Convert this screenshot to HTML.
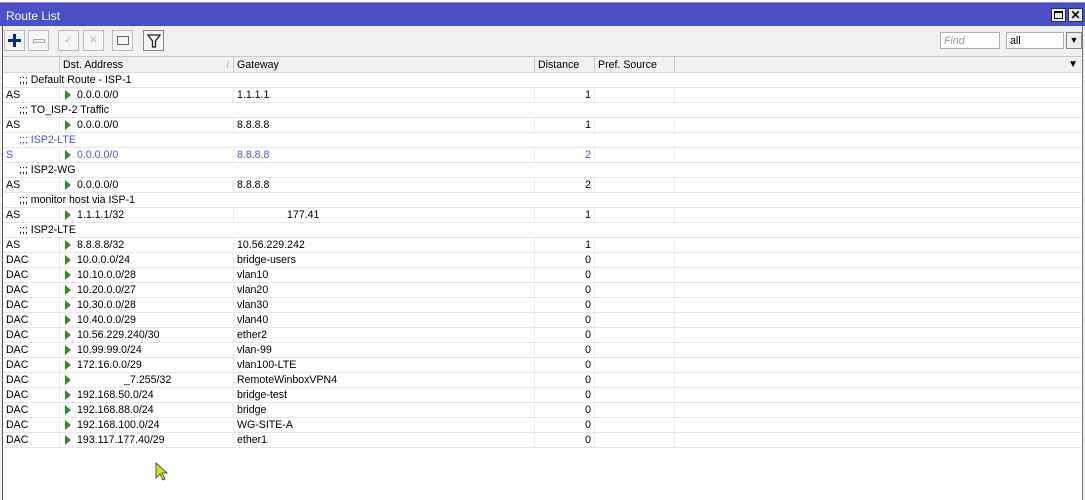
<!DOCTYPE html>
<html><head><meta charset="utf-8"><style>
*{margin:0;padding:0;box-sizing:border-box}
body{width:1085px;height:500px;background:#fff;font-family:"Liberation Sans",sans-serif;font-size:10.6px;color:#000;position:relative;overflow:hidden}
.a{position:absolute}
.title{left:0;top:2px;width:1085px;height:24px;background:#4b4fc8;color:#fff;font-size:12px;line-height:26px;padding-left:6px;border-top:1px solid #8a8ad8}
.tb{left:0;top:26px;width:1085px;height:30px;background:#f0f0f0}
.btn{top:30px;width:21px;height:21px;border:1px solid #bdbdbd;background:#f4f4f4}
.hdr{left:3px;top:56px;width:1079px;height:17px;background:#f0f0f0;border-top:1px solid #c8c8c8;border-bottom:1px solid #d8d8d8}
.hc{top:56px;height:17px;line-height:18px;border-left:1px solid #c8c8c8;padding-left:3px}
.row{left:3px;width:1079px;height:15px;border-bottom:1px solid #e6e6e6;line-height:15px;white-space:nowrap}
.row span{position:absolute;top:0}
.cell{border-left:1px solid #ececec;height:15px}
.tri{width:0;height:0;border-top:5px solid transparent;border-bottom:5px solid transparent;border-left:6px solid #2f8a2f;top:2px!important}
.blue{color:#4f58c0}
</style></head><body>
<div class="a title">Route List</div>
<div class="a" style="left:1051px;top:8px;width:15px;height:14px;background:#e8e8e8;border:1px solid #333"><div style="margin:2px;width:9px;height:8px;border:1px solid #000;border-top-width:2px"></div></div>
<div class="a" style="left:1068px;top:8px;width:15px;height:14px;background:#e8e8e8;border:1px solid #333;font-weight:bold;font-size:12px;line-height:12px;text-align:center">✕</div>
<div class="a tb"></div>
<div class="a btn" style="left:4px"><div class="a" style="left:3px;top:8px;width:13px;height:3px;background:#0a2a8a"></div><div class="a" style="left:8px;top:3px;width:3px;height:13px;background:#0a2a8a"></div></div>
<div class="a btn" style="left:28px"><div class="a" style="left:4px;top:8px;width:12px;height:4px;border:1px solid #aaa"></div></div>
<div class="a btn" style="left:58px;color:#bbb;text-align:center;line-height:19px">✓</div>
<div class="a btn" style="left:83px;color:#bbb;text-align:center;line-height:19px">✕</div>
<div class="a btn" style="left:112px"><div class="a" style="left:4px;top:5px;width:12px;height:9px;border:1px solid #666"></div></div>
<div class="a btn" style="left:143px;border-color:#888"><svg class="a" style="left:3px;top:3px" width="14" height="14"><path d="M1 1H13L8.5 7V13H5.5V7Z" fill="none" stroke="#222" stroke-width="1.3"/></svg></div>
<div class="a" style="left:940px;top:32px;width:60px;height:17px;border:1px solid #b0b0b0;background:#fff;color:#999;font-style:italic;padding-left:3px;line-height:16px">Find</div>
<div class="a" style="left:1006px;top:32px;width:58px;height:17px;border:1px solid #b0b0b0;background:#fff;padding-left:3px;line-height:16px">all</div>
<div class="a" style="left:1066px;top:32px;width:16px;height:17px;border:1px solid #888;background:#eee;text-align:center;font-size:9px;line-height:15px">▼</div>
<div class="a" style="left:0;top:26px;width:3px;height:474px;background:#f0f0f0;border-right:1px solid #555"></div>
<div class="a" style="left:1082px;top:26px;width:3px;height:474px;background:#f0f0f0;border-left:1px solid #777"></div>
<div class="a hdr"></div>
<div class="a hc" style="left:59px;width:174px">Dst. Address<span class="a" style="right:4px;color:#999;font-size:9px">/</span></div>
<div class="a hc" style="left:233px;width:301px">Gateway</div>
<div class="a hc" style="left:534px;width:60px">Distance</div>
<div class="a hc" style="left:594px;width:80px">Pref. Source</div>
<div class="a hc" style="left:674px;width:408px"><span class="a" style="right:4px;font-size:10px">▼</span></div>
<div id="rows"></div>
<div class="a" style="left:155px;top:462px"><svg width="14" height="20"><path d="M1 1V16L5 12L8 18L10 17L7 11H12Z" fill="#d6e020" stroke="#333" stroke-width="0.8"/></svg></div>
<script>
var R=[
["c",";;; Default Route - ISP-1"],["AS","0.0.0.0/0","1.1.1.1","1"],
["c",";;; TO_ISP-2 Traffic"],["AS","0.0.0.0/0","8.8.8.8","1"],
["cb",";;; ISP2-LTE"],["S","0.0.0.0/0","8.8.8.8","2","b"],
["c",";;; ISP2-WG"],["AS","0.0.0.0/0","8.8.8.8","2"],
["c",";;; monitor host via ISP-1"],["AS","1.1.1.1/32","                 177.41","1"],
["c",";;; ISP2-LTE"],["AS","8.8.8.8/32","10.56.229.242","1"],
["DAC","10.0.0.0/24","bridge-users","0"],["DAC","10.10.0.0/28","vlan10","0"],["DAC","10.20.0.0/27","vlan20","0"],
["DAC","10.30.0.0/28","vlan30","0"],["DAC","10.40.0.0/29","vlan40","0"],["DAC","10.56.229.240/30","ether2","0"],
["DAC","10.99.99.0/24","vlan-99","0"],["DAC","172.16.0.0/29","vlan100-LTE","0"],["DAC","                _7.255/32","RemoteWinboxVPN4","0"],
["DAC","192.168.50.0/24","bridge-test","0"],["DAC","192.168.88.0/24","bridge","0"],["DAC","192.168.100.0/24","WG-SITE-A","0"],
["DAC","193.117.177.40/29","ether1","0"]];
var h="";
R.forEach(function(r,i){var t=73+i*15;
if(r[0][0]=="c"){h+='<div class="a row'+(r[0]=="cb"?" blue":"")+'" style="top:'+t+'px"><span style="left:16px">'+r[1]+'</span></div>';}
else{h+='<div class="a row'+(r[4]?" blue":"")+'" style="top:'+t+'px"><span style="left:3px">'+r[0]+'</span>'+
'<span class="cell" style="left:56px;width:174px"></span><span class="tri" style="left:62px"></span><span style="left:74px;white-space:pre">'+r[1]+'</span>'+
'<span class="cell" style="left:230px;width:301px;padding-left:3px;white-space:pre">'+r[2]+'</span>'+
'<span class="cell" style="left:531px;width:60px;text-align:right;padding-right:3px">'+r[3]+'</span>'+
'<span class="cell" style="left:591px;width:80px"></span><span class="cell" style="left:671px;width:1px"></span></div>';}
});
document.getElementById("rows").innerHTML=h;
</script>
</body></html>
